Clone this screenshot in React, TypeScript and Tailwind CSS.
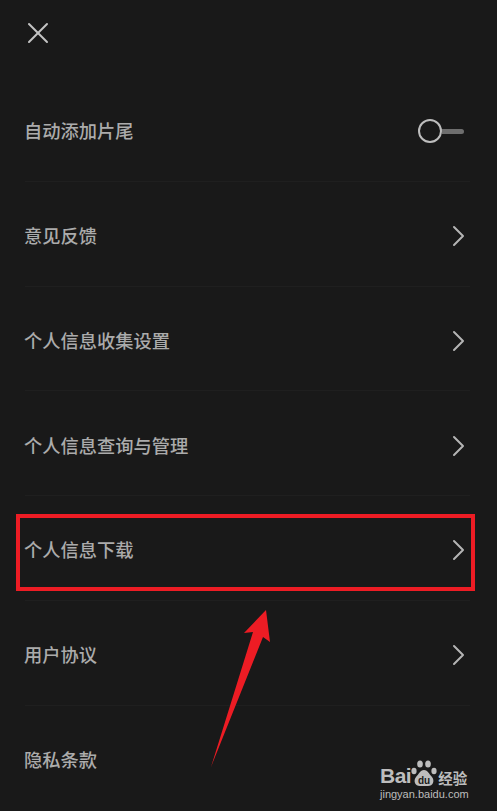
const FONT = "font-['Noto_Sans_CJK_SC','Noto_Sans',sans-serif]";

const ROWS = ["意见反馈", "个人信息收集设置", "个人信息查询与管理", "个人信息下载", "用户协议"];

function Chevron() {
  return (
    <svg className="mr-[5px]" width="14" height="22" viewBox="0 0 14 22" fill="none" stroke="#b4b4b4" strokeWidth="2" strokeLinecap="round" strokeLinejoin="round">
      <path d="M3 2 L12 11 L3 20" />
    </svg>
  );
}

function Toggle() {
  return (
    <div className="flex items-center mr-[6px]">
      <span className="w-6 h-6 rounded-full border-2 border-[#bdbdbd] shrink-0" />
      <span className="w-[22px] h-[5px] rounded-r-full bg-[#6e6e6e]" />
    </div>
  );
}

function Row({ label, right, last }: { label: string; right: React.ReactNode; last?: boolean }) {
  return (
    <div className={`h-[104.75px] pt-[5px] flex items-center justify-between ${last ? "" : "border-b border-[#1f1f1f]"}`}>
      <span className="text-[18.25px] leading-6 font-medium text-[#ababab] -ml-[1px] -translate-y-[1px]">{label}</span>
      {right}
    </div>
  );
}

function Watermark() {
  return (
    <div className="absolute left-[380px] top-[757px] w-[90px] flex flex-col text-[#bdbdbd]">
      <div className="flex items-end h-[30px]">
        <span className="text-[21px] leading-[24px] font-bold font-['Liberation_Sans',sans-serif] tracking-[-0.5px] -mb-[1px]">Bai</span>
        <svg width="28" height="30" viewBox="0 0 28 30" className="shrink-0 -ml-[1px]" fill="#bdbdbd">
          <ellipse cx="4" cy="14" rx="2.6" ry="3.2" />
          <ellipse cx="10" cy="7" rx="2.8" ry="3.6" />
          <ellipse cx="18" cy="7" rx="2.8" ry="3.6" />
          <ellipse cx="24" cy="14" rx="2.6" ry="3.2" />
          <path d="M14 13 C10 13 9 17 6 20 C3 24 5 29 10 29 L18 29 C23 29 25 24 22 20 C19 17 18 13 14 13 Z" />
          <text x="14" y="27" textAnchor="middle" fontSize="10" fontWeight="700" fill="#1a1a1a" fontFamily="Liberation Sans, sans-serif">du</text>
        </svg>
        <span className="text-[14.5px] leading-[18px] font-bold whitespace-nowrap">经验</span>
      </div>
      <span className="text-[11px] leading-3 mt-[1px] whitespace-nowrap font-['Liberation_Sans',sans-serif]">jingyan.baidu.com</span>
    </div>
  );
}

export default function App() {
  return (
    <div className={`relative w-[497px] h-[811px] overflow-hidden bg-[#191919] ${FONT}`}>
      {/* Close */}
      <div className="h-[77px] pl-[27px] pt-[22px]">
        <svg width="22" height="22" viewBox="0 0 22 22" fill="none" stroke="#c4c4c4" strokeWidth="2" strokeLinecap="round">
          <line x1="2" y1="2" x2="20" y2="20" />
          <line x1="20" y1="2" x2="2" y2="20" />
        </svg>
      </div>

      {/* Settings list */}
      <div className="pl-[25px] pr-[27px]">
        <Row label="自动添加片尾" right={<Toggle />} />
        {ROWS.map((r) => (
          <Row key={r} label={r} right={<Chevron />} />
        ))}
        <Row label="隐私条款" right={null} last />
      </div>

      {/* Annotation */}
      <div className="absolute left-[16px] top-[514px] w-[459px] h-[77px] border-4 border-[#ed1c24]" />
      <svg className="absolute left-0 top-0" width="497" height="811" fill="#ed1c24">
        <polygon points="266,610 270,642 263,637 211,767 253,632 244,633" />
      </svg>
      <Watermark />
    </div>
  );
}
